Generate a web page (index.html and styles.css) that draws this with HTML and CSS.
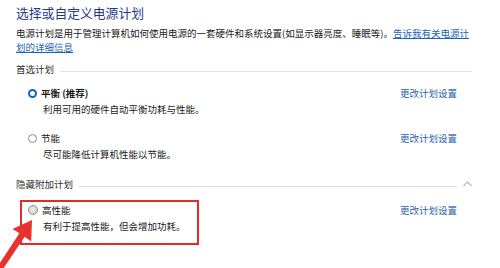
FILE: index.html
```html
<!DOCTYPE html>
<html lang="zh-CN">
<head>
<meta charset="utf-8">
<link rel="stylesheet" href="styles.css">
</head>
<body>
<div class="page">
  <h1 class="title">选择或自定义电源计划</h1>
  <p class="desc">电源计划是用于管理计算机如何使用电源的一套硬件和系统设置(如显示器亮度、睡眠等)。<a class="link" href="#">告诉我有关电源计<br>划的详细信息</a></p>

  <div class="section-head first">
    <span class="section-label">首选计划</span>
    <span class="rule"></span>
  </div>

  <div class="plan">
    <div class="plan-row">
      <span class="radio checked"></span>
      <span class="plan-name bold">平衡 (推荐)</span>
      <a class="change" href="#">更改计划设置</a>
    </div>
    <div class="plan-desc">利用可用的硬件自动平衡功耗与性能。</div>
  </div>

  <div class="plan second">
    <div class="plan-row">
      <span class="radio"></span>
      <span class="plan-name">节能</span>
      <a class="change" href="#">更改计划设置</a>
    </div>
    <div class="plan-desc">尽可能降低计算机性能以节能。</div>
  </div>

  <div class="section-head hidden-head">
    <span class="section-label">隐藏附加计划</span>
    <span class="rule short"></span>
    <svg class="chevron" width="9" height="6" viewBox="0 0 9 6"><polyline points="0.5,5 4.5,1 8.5,5" fill="none" stroke="#8a8a8a" stroke-width="1"/></svg>
  </div>

  <div class="plan third">
    <div class="plan-row">
      <span class="radio hover"></span>
      <span class="plan-name">高性能</span>
      <a class="change" href="#">更改计划设置</a>
    </div>
    <div class="plan-desc">有利于提高性能，但会增加功耗。</div>
  </div>
</div>

<div class="highlight"></div>
<svg class="arrow" width="500" height="268" viewBox="0 0 500 268">
  <polygon points="32,220 31.2,241.5 24.6,236.8 -9,287 -14,284 19.4,233.2 12.5,229" fill="#e8322f"/>
</svg>
</body>
</html>
```

FILE: styles.css
```css
html, body {
  margin: 0;
  padding: 0;
  background: #ffffff;
  overflow: hidden;
}

body {
  width: 500px;
  height: 268px;
  position: relative;
  font-family: "Noto Sans CJK SC", "Noto Sans", sans-serif;
  font-size: 9.5px;
  color: #1a1a1a;
}

.page {
  padding: 5px 28px 0 16px;
}

.title {
  margin: 0;
  font-size: 12.8px;
  line-height: 16px;
  font-weight: 400;
  color: #1f3a8c;
}

.desc {
  margin: 5px 0 0 0;
  line-height: 14px;
  white-space: nowrap;
}

.link {
  color: #1a63b0;
  text-decoration: underline;
}

.section-head {
  display: flex;
  align-items: center;
  gap: 6px;
  line-height: 14px;
  color: #2e2e2e;
}

.section-head.first {
  margin-top: 8px;
}

.section-head.hidden-head {
  margin-top: 15px;
}

.rule {
  flex: 1;
  height: 1px;
  background: #e2e2e2;
  margin-top: 4px;
}

.chevron {
  flex: none;
  margin-top: -1px;
}

.plan {
  margin-top: 9px;
}

.plan.second {
  margin-top: 13px;
}

.plan.third {
  margin-top: 11px;
}

.plan-row {
  display: flex;
  align-items: center;
  gap: 4px;
  padding-left: 12px;
  line-height: 16px;
}

.plan-name.bold {
  font-weight: 700;
}

.radio {
  flex: none;
  width: 9px;
  height: 9px;
  box-sizing: border-box;
  border-radius: 50%;
  border: 1px solid #8c8c8c;
  background: #ffffff;
}

.radio.checked {
  border: 2px solid #0a64c8;
}

.radio.hover {
  width: 10px;
  height: 10px;
  border-color: #8f8f8f;
  background: radial-gradient(circle at 45% 40%, #eeeeee 0%, #d2d2d2 70%, #c4c4c4 100%);
}

.change {
  margin-left: auto;
  margin-right: 15px;
  color: #2a62ad;
  text-decoration: none;
}

.plan-desc {
  padding-left: 27px;
  line-height: 16px;
}

.highlight {
  position: absolute;
  left: 20px;
  top: 200px;
  width: 179px;
  height: 45px;
  box-sizing: border-box;
  border: 2px solid #e52a2a;
}

.arrow {
  position: absolute;
  left: 0;
  top: 0;
  pointer-events: none;
}
```
